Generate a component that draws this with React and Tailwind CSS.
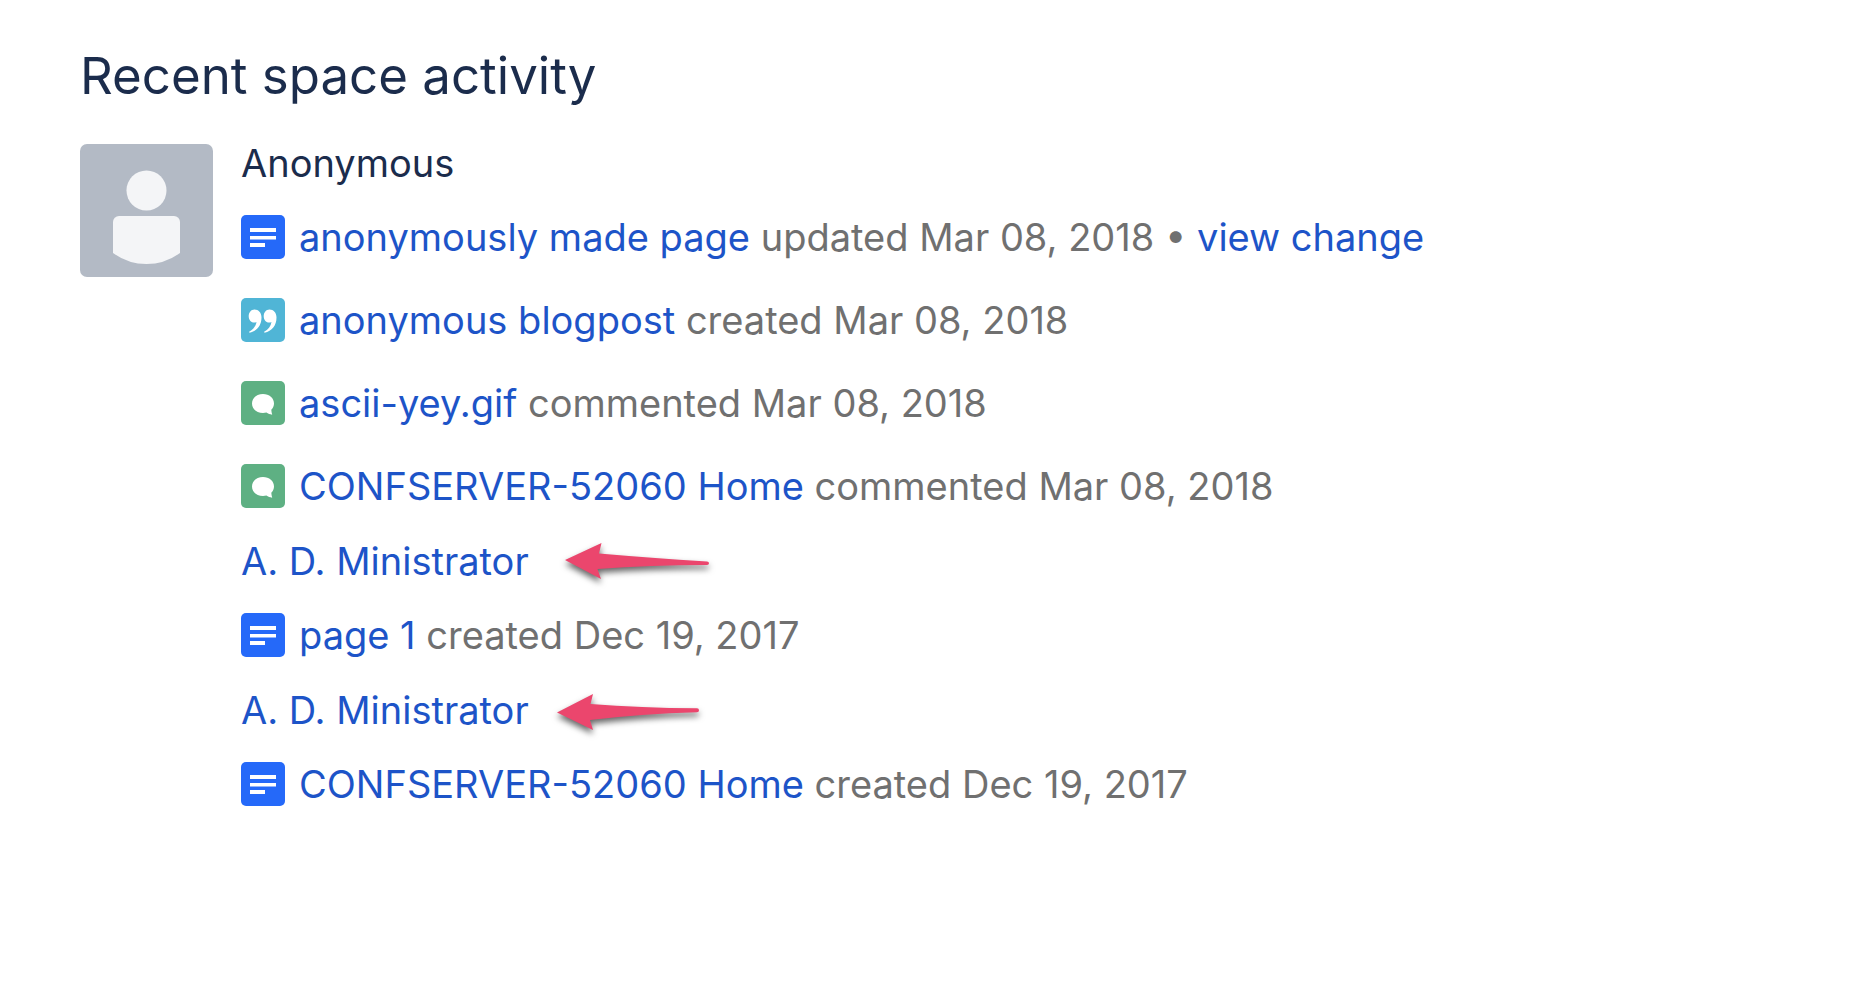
const activity = [
  {
    user: 'Anonymous',
    items: [
      { type: 'page', title: 'anonymously made page', action: 'updated', date: 'Mar 08, 2018', change: true },
      { type: 'blogpost', title: 'anonymous blogpost', action: 'created', date: 'Mar 08, 2018' },
      { type: 'comment', title: 'ascii-yey.gif', action: 'commented', date: 'Mar 08, 2018' },
      { type: 'comment', title: 'CONFSERVER-52060 Home', action: 'commented', date: 'Mar 08, 2018' },
    ],
  },
  {
    user: 'A. D. Ministrator',
    link: true,
    arrow: 'down',
    items: [{ type: 'page', title: 'page 1', action: 'created', date: 'Dec 19, 2017' }],
  },
  {
    user: 'A. D. Ministrator',
    link: true,
    arrow: 'up',
    items: [{ type: 'page', title: 'CONFSERVER-52060 Home', action: 'created', date: 'Dec 19, 2017' }],
  },
];

function Avatar() {
  return (
    <svg viewBox="0 0 133 133" className="size-[133px] shrink-0" role="img" aria-label="Anonymous">
      <rect width="133" height="133" rx="7" fill="#b3bac5" />
      <circle cx="66.5" cy="46.5" r="20" fill="#f4f5f7" />
      <path d="M39 72h55a6 6 0 0 1 6 6v31q-15 11-33.500 11T33 109V78a6 6 0 0 1 6-6z" fill="#f4f5f7" />
    </svg>
  );
}

function ContentIcon({ type }) {
  return (
    <svg viewBox="0 0 44 44" className="size-11 shrink-0" aria-hidden="true">
      {type === 'page' && (
        <>
          <rect width="44" height="44" rx="5" fill="#2569f9" />
          <path d="M9 13h26v4H9zM9 21h26v3.500H9zM9 28h15v4H9z" fill="#fff" />
        </>
      )}
      {type === 'blogpost' && (
        <>
          <rect width="44" height="44" rx="5" fill="#50b5d6" />
          <g fill="#fff">
            <path d="M13.500 11.500c4 0 7 3 7 8 0 8-4.500 13.500-12 15.200l-.4-1c4-2 6.800-5.500 7.400-9.700-.8.500-1.500.6-2.500.6-3 0-5.300-2.600-5.300-6.300 0-3.900 2.500-6.800 5.800-6.800z" />
            <path d="M28.500 11.500c4 0 7 3 7 8 0 8-4.500 13.500-12 15.200l-.4-1c4-2 6.800-5.500 7.400-9.700-.8.500-1.500.6-2.500.6-3 0-5.300-2.600-5.300-6.300 0-3.900 2.500-6.800 5.800-6.800z" />
          </g>
        </>
      )}
      {type === 'comment' && (
        <>
          <rect width="44" height="44" rx="5" fill="#5eb083" />
          <path d="M22 13c6.300 0 11 4 11 9.500 0 2.600-1.100 4.700-2.700 6.300.1 1.700.4 3.300.9 4.900-2.200-.2-4.200-.9-5.800-2.100-1 .3-2.200.4-3.400.4-6.300 0-11-4-11-9.500s4.700-9.500 11-9.500z" fill="#fff" />
        </>
      )}
    </svg>
  );
}

function Arrow({ direction }) {
  if (direction === 'down') {
    return (
      <svg viewBox="0 0 144 36" className="absolute left-[324px] top-px h-9 w-36 overflow-visible drop-shadow-[0_4px_3px_rgba(0,0,0,0.6)]" aria-hidden="true">
        <path d="M0 17 36.500 0l-2.500 10.500Q86 15 142 18.500q2 .2 2 1.800t-2 1.700Q86 22 32.500 26l3.500 10z" fill="#eb466d" />
      </svg>
    );
  }
  return (
    <svg viewBox="0 0 142 36" className="absolute left-[316px] top-[3px] h-9 w-[142px] overflow-visible drop-shadow-[0_4px_3px_rgba(0,0,0,0.6)]" aria-hidden="true">
      <path d="M0 18.500 36 0l-2.500 10Q84 14 140 14.300q2 .2 2 2t-2 2Q84 20 33 26l3 10z" fill="#eb466d" />
    </svg>
  );
}

function ActivityItem({ item }) {
  return (
    <li className="flex h-11 items-center gap-3.5">
      <ContentIcon type={item.type} />
      <p className="whitespace-nowrap text-[#707070]">
        <a href="#" className="text-[#1d54c8]">{item.title}</a> {item.action} {item.date}
        {item.change && (
          <>
            {' • '}
            <a href="#" className="text-[#1d54c8]">view change</a>
          </>
        )}
      </p>
    </li>
  );
}

export default function App() {
  return (
    <main className="min-h-screen bg-white px-20 pt-[46px] font-['Inter',sans-serif] text-[#1b2c4c]">
      <h1 className="text-[51px] leading-[60px]">Recent space activity</h1>
      <div className="mt-[38px] flex gap-7 text-[38px] leading-[39px]">
        <Avatar />
        <div className="flex flex-col gap-[34px]">
          {activity.map((group, index) => (
            <section key={index} className="flex flex-col gap-8">
              <h2 className="relative">
                {group.link ? <a href="#" className="text-[#1d54c8]">{group.user}</a> : group.user}
                {group.arrow && <Arrow direction={group.arrow} />}
              </h2>
              <ul className="flex flex-col gap-[39px]">
                {group.items.map((item) => (
                  <ActivityItem key={item.title} item={item} />
                ))}
              </ul>
            </section>
          ))}
        </div>
      </div>
    </main>
  );
}
